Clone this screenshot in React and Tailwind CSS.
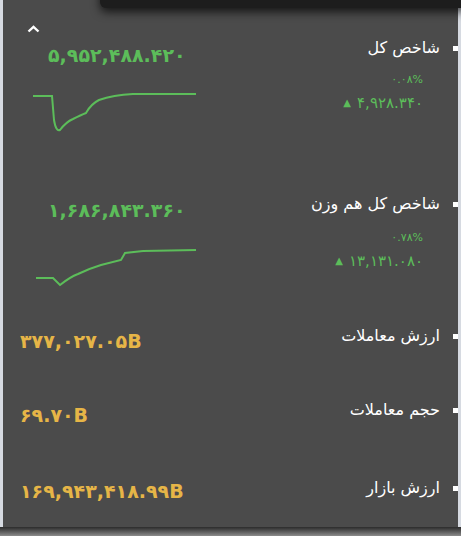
import React from 'react'

const green = 'text-[#5cbd5a]'
const gold = 'text-[#e6b547]'

function Label({ children }) {
  return (
    <div className="flex items-center justify-end gap-[13px]">
      <span dir="rtl" className="text-[16px] leading-[20px] text-white">{children}</span>
      <span className="h-[5px] w-[5px] bg-white" />
    </div>
  )
}

function Change({ pct, value }) {
  return (
    <div className={`mr-[35px] flex flex-col items-end ${green}`}>
      <span className="text-[11px] leading-[14px]">{pct}</span>
      <span className="mt-[7px] flex items-center gap-[6px] text-[15px] leading-[18px]">
        <span className="text-[10px]">▲</span>
        <span>{value}</span>
      </span>
    </div>
  )
}

export default function App() {
  return (
    <div className="relative h-[536px] w-[461px] overflow-hidden bg-[#d6dae1] font-['DejaVu_Sans',sans-serif]">
      <div className="absolute bottom-0 left-0 right-0 h-[9px] bg-gradient-to-b from-[#2c2c2c] to-[#8c8c8c]" />
      <div className="relative ml-[3px] h-[527px] w-[455px] bg-[#4b4b4b]">
        <div className="absolute left-[97px] right-[-10px] top-[-22px] h-[30px] rounded-md bg-[#1d1d1d] shadow-[0_4px_10px_rgba(0,0,0,0.7)]" />

        <div className="pl-[24px] pt-[25px]">
          <svg width="13" height="8" viewBox="0 0 13 8">
            <path d="M1.5 6.5 L6.5 1.8 L11.5 6.5" fill="none" stroke="#fff" strokeWidth="2.4" />
          </svg>
        </div>

        {/* شاخص کل */}
        <div className="mt-[5px] flex justify-between">
          <div className="flex flex-col">
            <span className={`ml-[45px] mt-[5px] text-[19px] font-bold leading-[24px] ${green}`}>۵,۹۵۲,۴۸۸.۴۲۰</span>
            <svg width="170" height="46" viewBox="0 0 170 46" className="ml-[30px] mt-[23px]">
              <path
                d="M0 6 L19 6 L21 30 Q23 42 27 40 Q33 32 40 29 Q48 25 53 23 Q58 14 66 10 Q80 5 100 4 L163 4"
                fill="none"
                stroke="#5cbd5a"
                strokeWidth="2"
              />
            </svg>
          </div>
          <div className="flex flex-col items-end">
            <Label>شاخص کل</Label>
            <div className="mt-[15px]">
              <Change pct="۰.۰۸%" value="۴,۹۲۸.۳۴۰" />
            </div>
          </div>
        </div>

        {/* شاخص کل هم وزن */}
        <div className="mt-[58px] flex justify-between">
          <div className="flex flex-col">
            <span className={`ml-[45px] mt-[4px] text-[19px] font-bold leading-[24px] ${green}`}>۱,۶۸۶,۸۴۳.۳۶۰</span>
            <svg width="170" height="46" viewBox="0 0 170 46" className="ml-[30px] mt-[26px]">
              <path
                d="M3 30 L20 30 L27 37 Q37 29 45 26 Q55 21 68 17 L88 12 L92 5 L110 3 L163 2"
                fill="none"
                stroke="#5cbd5a"
                strokeWidth="2"
              />
            </svg>
          </div>
          <div className="flex flex-col items-end">
            <Label>شاخص کل هم وزن</Label>
            <div className="mt-[17px]">
              <Change pct="۰.۷۸%" value="۱۳,۱۳۱.۰۸۰" />
            </div>
          </div>
        </div>

        {/* ارزش معاملات */}
        <div className="mt-[32px] flex items-start justify-between">
          <span className={`ml-[17px] mt-[3px] text-[19px] font-bold leading-[24px] ${gold}`}>۳۷۷,۰۲۷.۰۵B</span>
          <Label>ارزش معاملات</Label>
        </div>

        {/* حجم معاملات */}
        <div className="mt-[47px] flex items-start justify-between">
          <span className={`ml-[17px] mt-[3px] text-[19px] font-bold leading-[24px] ${gold}`}>۶۹.۷۰B</span>
          <Label>حجم معاملات</Label>
        </div>

        {/* ارزش بازار */}
        <div className="mt-[51px] flex items-start justify-between">
          <span className={`ml-[17px] mt-[1px] text-[19px] font-bold leading-[24px] ${gold}`}>۱۶۹,۹۴۳,۴۱۸.۹۹B</span>
          <Label>ارزش بازار</Label>
        </div>
      </div>
    </div>
  )
}
